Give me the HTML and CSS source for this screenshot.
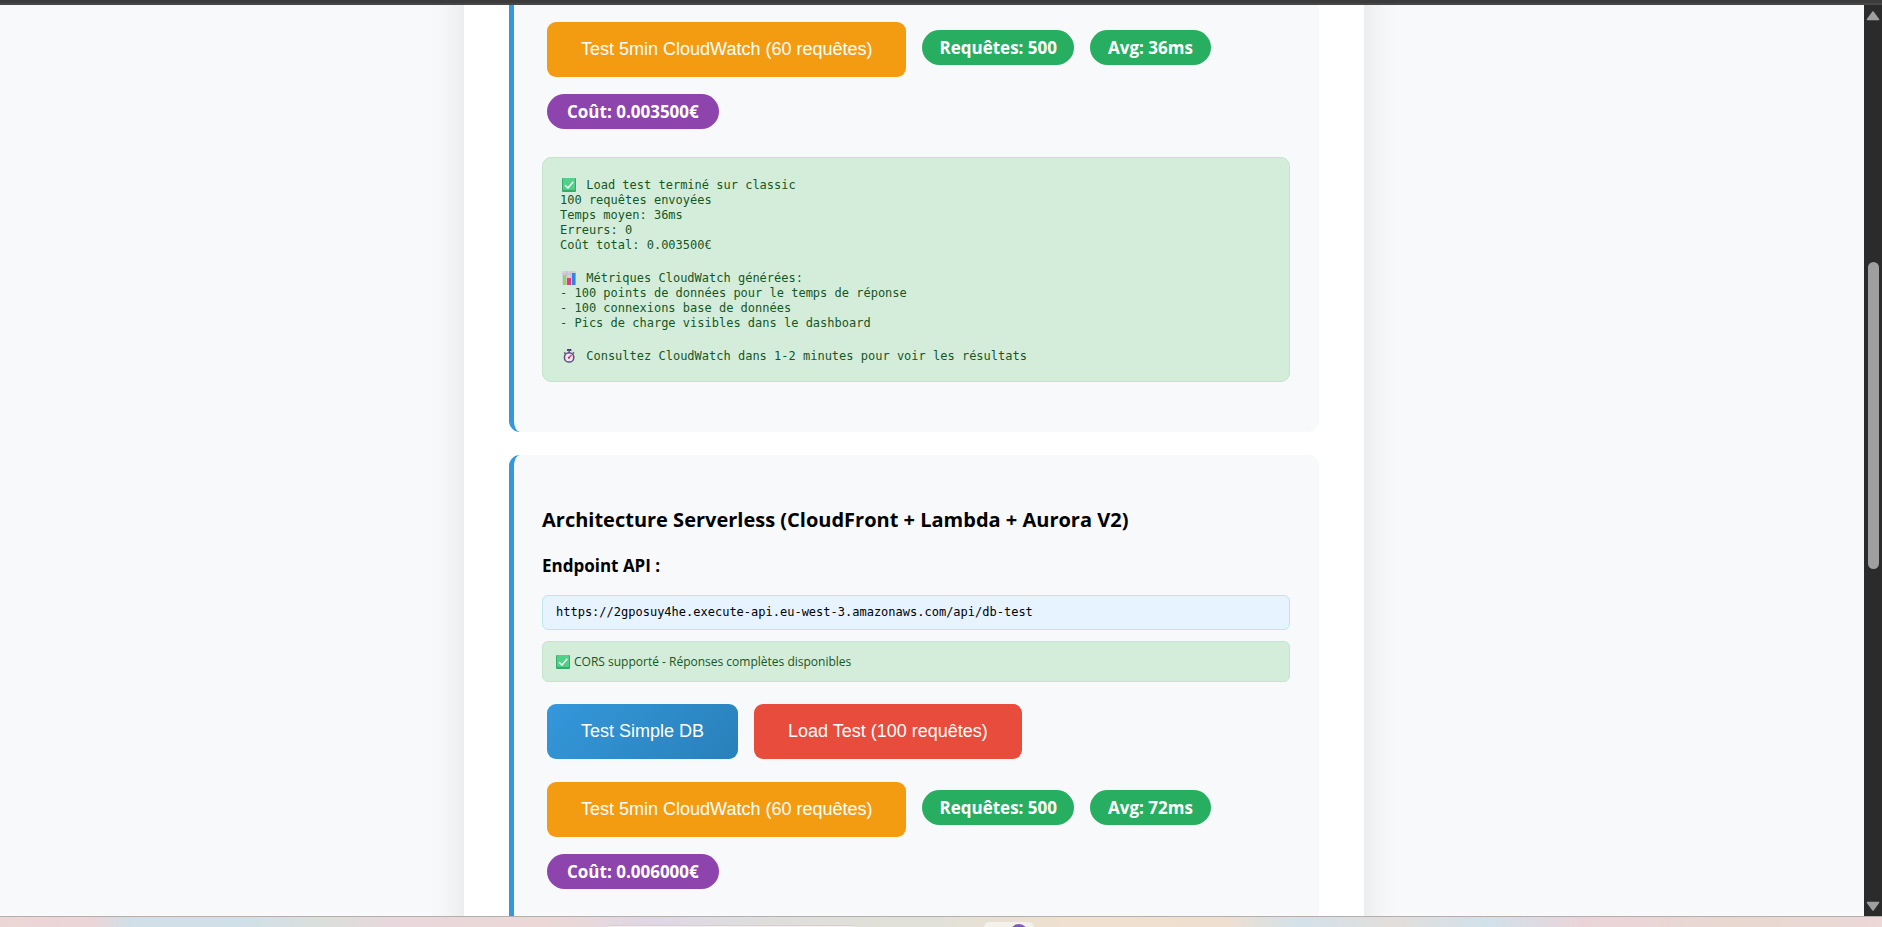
FILE: index.html
```html
<!DOCTYPE html>
<html lang="fr">
<head>
<meta charset="utf-8">
<title>Comparaison d'architectures</title>
<link rel="stylesheet" href="styles.css">
</head>
<body>
<svg class="defs" aria-hidden="true">
  <defs>
    <linearGradient id="check-fill" x1="0" y1="0" x2="0" y2="1"><stop offset="0" stop-color="#52d18b"/><stop offset="1" stop-color="#4fcf86"/></linearGradient>
    <symbol id="check" viewBox="0 0 14 14">
      <rect width="14" height="14" rx="1" fill="#36ab6b"/>
      <rect x="1" y="0" width="12" height="12" rx="1" fill="url(#check-fill)"/>
      <path d="M3 7.2 6 10 11.3 3.8" fill="none" stroke="#fff" stroke-width="1.4"/>
    </symbol>
    <symbol id="chart" viewBox="0 0 14 14">
      <rect width="14" height="14" rx="1" fill="#d3cfdd"/>
      <path d="M0 3h14M5 0v14M9 0v14" stroke="#bdb7ca" stroke-width=".6"/>
      <rect x="1" y="4" width="3" height="10" fill="#8bdc4f"/>
      <rect x="5" y="7" width="4" height="7" fill="#e03a7c"/>
      <rect x="10" y="2" width="3.5" height="12" fill="#2f86e0"/>
    </symbol>
    <symbol id="watch" viewBox="0 0 14 14">
      <rect x="5" y="0" width="4.4" height="2" rx=".6" fill="#483c66"/>
      <path d="M7.2 1v3M2.2 3.4l1.3 1.2M12 3.4l-1.3 1.2" stroke="#6b5b8c" stroke-width="1.5"/>
      <circle cx="7.1" cy="8.4" r="4.7" fill="#ece6f4" stroke="#5c4b7e" stroke-width="1.5"/>
      <path d="M6.6 9 9.6 5.9" stroke="#e0355f" stroke-width="1.3"/>
      <circle cx="6.9" cy="8.8" r="1" fill="#b72c58"/>
    </symbol>
  </defs>
</svg>

<div class="window-edge"></div>

<div class="viewport">
  <main class="page">
    <div class="container">
      <section class="card card-first">
        <div class="actions">
          <button class="btn btn-orange" type="button">Test 5min CloudWatch (60 requêtes)</button>
          <span class="badge">Requêtes: 500</span>
          <span class="badge badge-avg">Avg: 36ms</span>
          <span class="badge badge-cost">Coût: 0.003500€</span>
        </div>
        <pre class="result"><span class="line line-icon"><svg class="emoji"><use href="#check"/></svg> Load test terminé sur classic</span><span class="line">100 requêtes envoyées</span><span class="line">Temps moyen: 36ms</span><span class="line">Erreurs: 0</span><span class="line">Coût total: 0.003500€</span><span class="line"></span><span class="line line-icon"><svg class="emoji"><use href="#chart"/></svg> Métriques CloudWatch générées:</span><span class="line">- 100 points de données pour le temps de réponse</span><span class="line">- 100 connexions base de données</span><span class="line">- Pics de charge visibles dans le dashboard</span><span class="line"></span><span class="line line-icon"><svg class="emoji"><use href="#watch"/></svg> Consultez CloudWatch dans 1-2 minutes pour voir les résultats</span></pre>
      </section>

      <section class="card">
        <h3 class="card-title">Architecture Serverless (CloudFront + Lambda + Aurora V2)</h3>
        <h4 class="card-subtitle">Endpoint API :</h4>
        <div class="endpoint">https://2gposuy4he.execute-api.eu-west-3.amazonaws.com/api/db-test</div>
        <div class="cors"><svg class="emoji"><use href="#check"/></svg>CORS supporté - Réponses complètes disponibles</div>
        <div class="actions">
          <button class="btn btn-blue" type="button">Test Simple DB</button>
          <button class="btn btn-red" type="button">Load Test (100 requêtes)</button>
        </div>
        <div class="actions">
          <button class="btn btn-orange" type="button">Test 5min CloudWatch (60 requêtes)</button>
          <span class="badge">Requêtes: 500</span>
          <span class="badge badge-avg">Avg: 72ms</span>
          <span class="badge badge-cost">Coût: 0.006000€</span>
        </div>
      </section>
    </div>
  </main>
  <div class="scrollbar">
    <svg class="arrow" viewBox="0 0 14 10"><path d="M7 1 12.5 8.5H1.5Z" fill="#9f9f9f" stroke="#9f9f9f" stroke-width="1.6" stroke-linejoin="round"/></svg>
    <div class="track"><div class="thumb"></div></div>
    <svg class="arrow" viewBox="0 0 14 10"><path d="M7 9 12.5 1.5H1.5Z" fill="#9f9f9f" stroke="#9f9f9f" stroke-width="1.6" stroke-linejoin="round"/></svg>
  </div>
</div>

<div class="taskbar">
  <div class="task-search"></div>
  <div class="task-app"><div class="task-avatar"></div></div>
</div>
</body>
</html>
```

FILE: styles.css
```css
* {
  box-sizing: border-box;
}

body {
  margin: 0;
  height: 100vh;
  display: flex;
  flex-direction: column;
  overflow: hidden;
  background: #f8f9fb;
  color: #000;
  font-family: "Segoe UI", "Open Sans", "Noto Sans", sans-serif;
  font-size: 18px;
}

.defs {
  position: absolute;
  width: 0;
  height: 0;
}

.window-edge {
  flex: none;
  height: 5px;
  background: #3b3b3b;
  border-bottom: 2px solid #474747;
}

.viewport {
  flex: 1;
  min-height: 0;
  display: flex;
}

.page {
  flex: 1;
  overflow: hidden;
  padding-right: 36px;
}

.container {
  max-width: 900px;
  min-height: 120vh;
  margin: -45px auto 0;
  padding: 45px 45px 0;
  background: #fff;
  box-shadow: 0 0 34px rgba(0, 0, 0, 0.1);
}

.card {
  margin-bottom: 23px;
  padding: 50px 29px 50px 28px;
  background: #f8f9fb;
  border-left: 5px solid #3498db;
  border-radius: 11px;
}

.card-first {
  margin-top: 0;
  padding-top: 17px;
  border-top-left-radius: 0;
  border-top-right-radius: 0;
}

.card-title {
  margin: 0 0 18px;
  font-size: 20px;
  line-height: 29px;
}

.card-subtitle {
  margin: 0 0 16px;
  font-size: 17px;
  line-height: 27px;
}

.actions {
  display: flex;
  flex-wrap: wrap;
  align-items: flex-start;
  gap: 17px 16px;
  margin: 0 5px 23px;
}

.btn {
  height: 55px;
  padding: 0 34px;
  border: 0;
  border-radius: 9px;
  color: #fff;
  font-family: Arial, "Liberation Sans", sans-serif;
  font-size: 18px;
  cursor: pointer;
}

.btn-orange {
  background: #f39c12;
}

.btn-red {
  background: #e74c3c;
}

.btn-blue {
  background: linear-gradient(135deg, #3498db, #2980b9);
}

.badge {
  margin-top: 8px;
  padding: 0 17px;
  border-radius: 18px;
  background: #27ae60;
  color: #fff;
  font-size: 17px;
  font-weight: 700;
  line-height: 35px;
}

.badge-avg {
  padding: 0 18px;
}

.badge-cost {
  margin-top: 0;
  padding: 0 20px;
  background: #8e44ad;
}

.result {
  margin: 28px 0 0;
  padding: 17px;
  border: 1px solid #c3e6cb;
  border-radius: 9px;
  background: #d4edda;
  color: #155724;
  font-family: Consolas, "DejaVu Sans Mono", monospace;
  font-size: 12px;
  line-height: 15px;
}

.line {
  display: block;
  height: 15px;
}

.line-icon {
  height: 18px;
  padding-top: 3px;
}

.emoji {
  width: 14px;
  height: 14px;
  margin: 0 3px 0 2px;
  vertical-align: -3px;
}

.endpoint,
.cors {
  margin-bottom: 11px;
  padding: 0 13px;
  border: 1px solid #bee5eb;
  border-radius: 6px;
  background: #e7f3ff;
  font-family: Consolas, "DejaVu Sans Mono", monospace;
  font-size: 12px;
  line-height: 33px;
}

.cors {
  margin-bottom: 22px;
  border-color: #c3e6cb;
  background: #d4edda;
  color: #155724;
  font-family: "Segoe UI", "Open Sans", "Noto Sans", sans-serif;
  line-height: 39px;
}

.cors .emoji {
  margin: 0 4px 0 0;
}

.scrollbar {
  flex: none;
  width: 18px;
  display: flex;
  flex-direction: column;
  align-items: center;
  padding: 6px 0 5px;
  background: #2b2b2b;
}

.arrow {
  width: 14px;
  height: 10px;
}

.track {
  flex: 1;
  padding-top: 241px;
}

.thumb {
  width: 11px;
  height: 48%;
  border-radius: 6px;
  background: #9f9f9f;
}

.taskbar {
  flex: none;
  height: 11px;
  display: flex;
  align-items: flex-end;
  padding-left: 608px;
  overflow: hidden;
  border-top: 1px solid #b5b0ae;
  background: linear-gradient(90deg, #ecd6d5 0, #ead5d8 5%, #d0dfe8 7%, #d0e0e8 13%, #dadfdb 17%, #e8d7dc 21%, #ebd8d5 29%, #dfd7e6 35%, #dddedd 40%, #e2e1d8 50%, #f0e0cf 57%, #efdfd0 65%, #d3e1e9 69%, #e2dedb 74%, #d1e1ea 79%, #ead4da 84%, #e8d8d0 92%, #ebd8d7 100%);
}

.task-search {
  flex: none;
  width: 246px;
  height: 2px;
  margin-right: 130px;
  border-top: 1px solid #d6cfd0;
  border-radius: 4px 4px 0 0;
  background: #f5f1f2;
}

.task-app {
  flex: none;
  width: 50px;
  height: 5px;
  display: flex;
  justify-content: flex-end;
  padding: 2px 6px 0 0;
  border-radius: 5px 5px 0 0;
  background: #f4f0ea;
}

.task-avatar {
  width: 18px;
  height: 18px;
  border-radius: 50%;
  background: #7e57c2;
}
```
